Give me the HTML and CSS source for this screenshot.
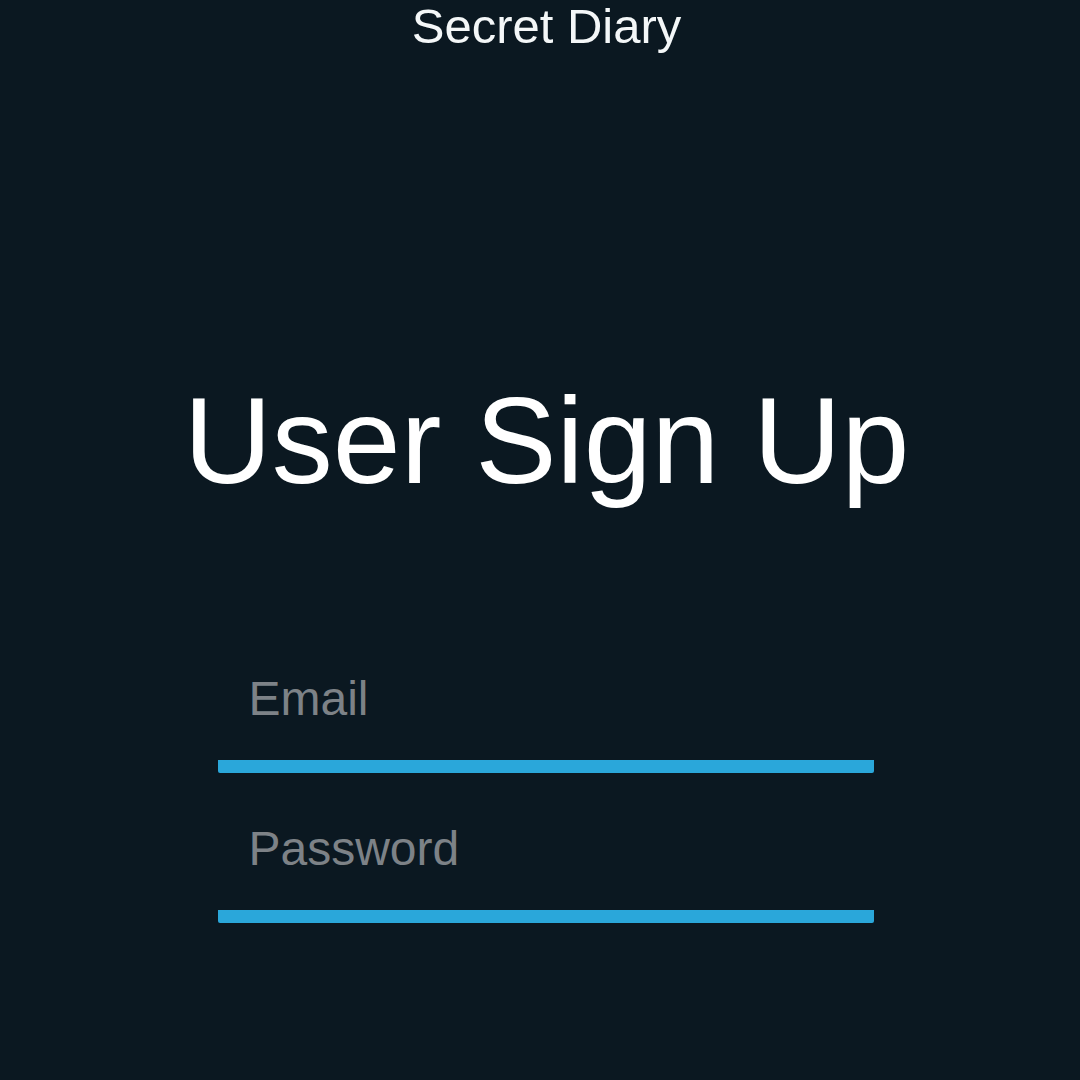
FILE: index.html
```html
<!DOCTYPE html>
<html lang="en">
<head>
<meta charset="utf-8">
<title>Secret Diary - Sign Up</title>
<link rel="stylesheet" href="styles.css">
</head>
<body>
<div class="page">
  <header class="topbar">Secret Diary</header>
  <main class="main">
    <h1 class="heading">User Sign Up</h1>
    <form class="form">
      <input class="field" type="email" placeholder="Email">
      <input class="field" type="password" placeholder="Password">
    </form>
  </main>
</div>
</body>
</html>
```
FILE: styles.css
```css
html, body {
  margin: 0;
  padding: 0;
  background: #0b1821;
}
body {
  font-family: "Liberation Sans", Arial, sans-serif;
  color: #ffffff;
  width: 1080px;
  height: 1080px;
  overflow: hidden;
}
.page {
  padding-left: 13px;
  display: flex;
  flex-direction: column;
  align-items: center;
}
.topbar {
  font-size: 49px;
  line-height: 52px;
  text-align: center;
  color: #f4f7f8;
}
.main {
  display: flex;
  flex-direction: column;
  align-items: center;
  padding-top: 329px;
}
.heading {
  margin: 0;
  font-size: 122px;
  line-height: 120px;
  font-weight: normal;
  color: #ffffff;
}
.form {
  margin-top: 162px;
  width: 656px;
  display: flex;
  flex-direction: column;
  gap: 40px;
}
.field {
  display: block;
  box-sizing: content-box;
  width: 596px;
  height: 70px;
  padding: 0 30px 27px;
  margin: 0;
  border: none;
  border-bottom: 13px solid #2aa7da;
  border-radius: 2px;
  background: transparent;
  font-family: "Liberation Sans", Arial, sans-serif;
  font-size: 48px;
  color: #ffffff;
  outline: none;
}
.field::placeholder {
  color: #7d8287;
  opacity: 1;
}
```
